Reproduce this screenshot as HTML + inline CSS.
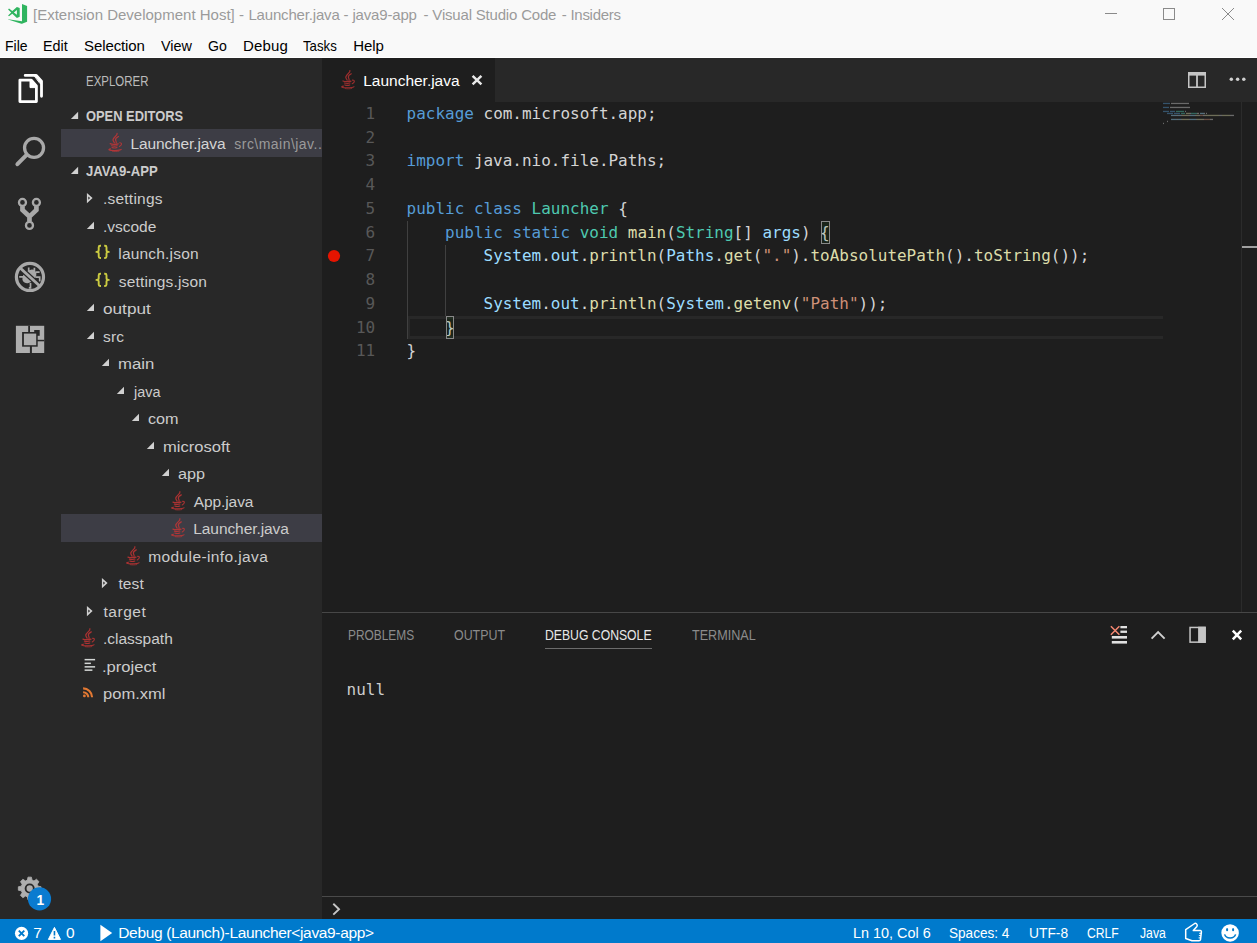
<!DOCTYPE html>
<html lang="en">
<head>
<meta charset="utf-8">
<title>[Extension Development Host] - Launcher.java - java9-app - Visual Studio Code - Insiders</title>
<style>
html,body{margin:0;padding:0;}
body{width:1257px;height:943px;overflow:hidden;position:relative;background:#1e1e1e;font-family:"Liberation Sans",sans-serif;}
.b{position:absolute;}
.t{position:absolute;white-space:pre;transform-origin:0 50%;display:block;}
svg{position:absolute;overflow:visible;}
.code{position:absolute;left:406.6px;white-space:pre;font-family:"DejaVu Sans Mono","Liberation Mono",monospace;font-size:15.987px;line-height:24px;height:24px;color:#d4d4d4;}
.ln{position:absolute;left:322px;width:53.2px;text-align:right;white-space:pre;font-family:"DejaVu Sans Mono","Liberation Mono",monospace;font-size:15.987px;line-height:24px;height:24px;color:#585858;}
.k{color:#569cd6}.ty{color:#4ec9b0}.v{color:#9cdcfe}.f{color:#dcdcaa}.s{color:#ce9178}
</style>
</head>
<body>
<header id="titlebar" aria-label="Title bar">
<div class="b" style="left:0px;top:0px;width:1257px;height:57px;background:#f9f9f9;"></div>
<div class="b" style="left:0px;top:57px;width:1257px;height:1px;background:#ffffff;"></div>
<div class="b" style="left:1105px;top:13px;width:12px;height:1px;background:#8a8a8a;"></div>
<div class="b" style="left:1163px;top:8px;width:10px;height:10px;border:1px solid #8a8a8a;"></div>
<svg style="left:1222px;top:8px" width="12" height="12" viewBox="0 0 12 12"><path d="M0 0L12 12M12 0L0 12" stroke="#8a8a8a" stroke-width="1" fill="none"/></svg>
<svg width="1257" height="943" viewBox="0 0 1257 943" style="left:0;top:0" aria-hidden="true">
<g transform="translate(2 0)" fill="#2fb45f"><path d="M20 3.9L25.1 6.1V21.7L20 23.75Z"/><path d="M6.1 19.2L20 21.3V23.75H19.4L6.1 19.6Z"/><path fill-rule="evenodd" d="M14.9 6.9L17.7 8.1V16.7L14.9 17.9L10.3 13.7L7 16.2L6.1 15.4L9.2 12.4L6.1 9.4L7 8.6L10.3 11.1ZM14.9 10.1L11.9 12.4L14.9 14.7Z"/></g>
</svg>
<span class="t" style='left:32.98px;top:5px;color:#9b9b9b;line-height:20px;font-size:15px;'>[Extension Development Host] -</span>
<span class="t" style='left:248.38px;top:5px;color:#9b9b9b;line-height:20px;font-size:15px;letter-spacing:-0.168px;'>Launcher.java - java9-app</span>
<span class="t" style='left:423.56px;top:5px;color:#9b9b9b;line-height:20px;font-size:15px;letter-spacing:-0.188px;'>- Visual Studio Code</span>
<span class="t" style='left:561.74px;top:5px;color:#9b9b9b;line-height:20px;font-size:15px;letter-spacing:-0.257px;'>- Insiders</span>
</header>
<nav id="menubar" aria-label="Menu bar">
<span class="t" style='left:5.45px;top:36px;color:#000000;line-height:20px;font-size:15px;transform:scaleX(0.9320);'>File</span>
<span class="t" style='left:42.96px;top:36px;color:#000000;line-height:20px;font-size:15px;transform:scaleX(0.9552);'>Edit</span>
<span class="t" style='left:84.12px;top:36px;color:#000000;line-height:20px;font-size:15px;letter-spacing:-0.115px;'>Selection</span>
<span class="t" style='left:160.74px;top:36px;color:#000000;line-height:20px;font-size:15px;transform:scaleX(0.9606);'>View</span>
<span class="t" style='left:208.17px;top:36px;color:#000000;line-height:20px;font-size:15px;transform:scaleX(0.9406);'>Go</span>
<span class="t" style='left:242.95px;top:36px;color:#000000;line-height:20px;font-size:15px;letter-spacing:0.178px;'>Debug</span>
<span class="t" style='left:303.42px;top:36px;color:#000000;line-height:20px;font-size:15px;transform:scaleX(0.8813);'>Tasks</span>
<span class="t" style='left:353.17px;top:36px;color:#000000;line-height:20px;font-size:15px;letter-spacing:-0.018px;'>Help</span>
</nav>
<aside id="activitybar" aria-label="Activity bar">
<div class="b" style="left:0px;top:58px;width:61px;height:861px;background:#282828;"></div>
<svg width="1257" height="943" viewBox="0 0 1257 943" style="left:0;top:0" aria-hidden="true">
<g transform="translate(10 66)" fill="none" stroke="#ffffff" stroke-width="2.8" stroke-linejoin="round" stroke-linecap="round"><path d="M9.9 14.1H21.3L26.4 19.9V35.6H9.9Z"/><path d="M20 14.1V21.6H26.4L21.3 14.1Z" fill="#ffffff" stroke-width="1"/><path d="M15.2 9.4H26.3L31.5 15.2V30.3"/><path d="M24.2 9.4H26.3L31.5 15.2V17.6H30.4Z" fill="#ffffff" stroke-width="1"/></g>
<g transform="translate(10 130)" fill="none" stroke="#a9a9a9"><circle cx="24.05" cy="17.85" r="9.5" stroke-width="3.3"/><path d="M16.6 24.8L7.4 34.2" stroke-width="4" stroke-linecap="round"/></g>
<g transform="translate(10 192)" fill="none" stroke="#a9a9a9"><circle cx="12.47" cy="10.47" r="3.5" stroke-width="2.3"/><circle cx="26.4" cy="10.47" r="3.5" stroke-width="2.3"/><circle cx="19.47" cy="33.4" r="3.5" stroke-width="2.3"/><path d="M12.47 14.2V18L19.47 24.6V29.6M26.4 14.2V18L19.47 24.6" stroke-width="4.7" stroke-linejoin="miter"/></g>
<g transform="translate(9 255)" fill="none" stroke="#a9a9a9"><ellipse cx="20.4" cy="21.4" rx="8" ry="5.6" transform="rotate(-42 20.4 21.4)" fill="#a9a9a9" stroke="none"/><path d="M10.2 21.9H15M27 17.2H30.6M26.5 22.1H30.7V26.4M19.7 12.4V17M25.4 12.8V16.5M21.5 28V32.9H19.8" stroke-width="1.7"/><path d="M11.2 13L30.7 31" stroke="#282828" stroke-width="5.2"/><path d="M11.2 13L30.7 31" stroke-width="2.9"/><circle cx="20.95" cy="21.95" r="13.55" stroke-width="3.2"/></g>
<g transform="translate(9 318)"><rect x="6.9" y="7.8" width="28.3" height="27.2" fill="#aeaeae"/><g fill="#282828"><rect x="19.2" y="7.8" width="1.8" height="7"/><rect x="20.9" y="28" width="2" height="7"/><rect x="28" y="21.8" width="7.2" height="1.5"/><rect x="25.2" y="12" width="5.5" height="5.8"/><rect x="13.1" y="14" width="15.6" height="14.7"/></g><rect x="14.9" y="15.6" width="12.3" height="11.6" fill="#aeaeae"/></g>
<path d="M27.98 877.13L31.42 877.13L32.02 880.12L33.99 880.93L36.53 879.24L38.96 881.67L37.27 884.21L38.08 886.18L41.07 886.78L41.07 890.22L38.08 890.82L37.27 892.79L38.96 895.33L36.53 897.76L33.99 896.07L32.02 896.88L31.42 899.87L27.98 899.87L27.38 896.88L25.41 896.07L22.87 897.76L20.44 895.33L22.13 892.79L21.32 890.82L18.33 890.22L18.33 886.78L21.32 886.18L22.13 884.21L20.44 881.67L22.87 879.24L25.41 880.93L27.38 880.12Z" fill="#aeaeae" stroke="#aeaeae" stroke-width="0.8" stroke-linejoin="round"/>
<circle cx="29.7" cy="888.5" r="4.1" fill="#aeaeae" stroke="#282828" stroke-width="1.9"/>
<circle cx="39.5" cy="898.9" r="11.6" fill="#0a7bd0"/>
</svg>
<span class="t" style='left:36.61px;top:891px;color:#ffffff;line-height:20px;font-size:13.75px;font-weight:700;'>1</span>
</aside>
<aside id="sidebar" aria-label="Explorer">
<div class="b" style="left:61px;top:58px;width:261px;height:861px;background:#282828;"></div>
<div class="b" style="left:61px;top:129px;width:261px;height:28px;background:#3d3d45;"></div>
<div class="b" style="left:61px;top:514px;width:261px;height:27.5px;background:#3d3d45;"></div>
<svg width="1257" height="943" viewBox="0 0 1257 943" style="left:0;top:0" aria-hidden="true">
<path fill-rule="evenodd" d="M86.90 193.00L92.60 198.10L86.90 203.20ZM88.30 196.40V199.80L90.10 198.10Z" fill="#d0d0d0"/>
<path d="M94.00 221.80V229.00H86.80Z" fill="#d0d0d0"/>
<g transform="translate(95.80 244.80)" fill="none" stroke="#cbcb41" stroke-width="1.9" stroke-linejoin="round"><path d="M5.2 1H4.3Q2.9 1 2.9 2.4V5.4Q2.9 7.1 0.6 7.1Q2.9 7.1 2.9 8.8V11.8Q2.9 13.2 4.3 13.2H5.2"/><path d="M8.4 1H9.3Q10.7 1 10.7 2.4V5.4Q10.7 7.1 13 7.1Q10.7 7.1 10.7 8.8V11.8Q10.7 13.2 9.3 13.2H8.4"/></g>
<g transform="translate(95.80 272.80)" fill="none" stroke="#cbcb41" stroke-width="1.9" stroke-linejoin="round"><path d="M5.2 1H4.3Q2.9 1 2.9 2.4V5.4Q2.9 7.1 0.6 7.1Q2.9 7.1 2.9 8.8V11.8Q2.9 13.2 4.3 13.2H5.2"/><path d="M8.4 1H9.3Q10.7 1 10.7 2.4V5.4Q10.7 7.1 13 7.1Q10.7 7.1 10.7 8.8V11.8Q10.7 13.2 9.3 13.2H8.4"/></g>
<path d="M94.00 303.80V311.00H86.80Z" fill="#d0d0d0"/>
<path d="M94.00 331.80V339.00H86.80Z" fill="#d0d0d0"/>
<path d="M109.00 358.80V366.00H101.80Z" fill="#d0d0d0"/>
<path d="M124.00 386.80V394.00H116.80Z" fill="#d0d0d0"/>
<path d="M139.00 413.80V421.00H131.80Z" fill="#d0d0d0"/>
<path d="M154.00 441.80V449.00H146.80Z" fill="#d0d0d0"/>
<path d="M169.00 468.80V476.00H161.80Z" fill="#d0d0d0"/>
<g transform="translate(170.60 491.00)" fill="none" stroke="#cc3535" stroke-linecap="round" opacity="0.8"><path d="M9.3 0.7C10.2 2.8 5.4 4.6 5.2 7.2C5.1 8.4 6.2 9.2 6.5 10.2" stroke-width="1.25"/><path d="M10.7 3.9C8.6 5 7.4 6.2 7.8 7.5C8.1 8.5 8.9 9.2 8.4 10.4" stroke-width="1.2"/><path d="M2.4 11.1C4 11.9 8.5 11.8 10.4 11.2" stroke-width="1.3"/><path d="M3.8 13.1C5.5 13.6 8.3 13.5 9.4 13.1" stroke-width="1.1"/><path d="M4.2 15C5.6 15.5 8.2 15.4 9.2 15" stroke-width="1.1"/><path d="M11.9 10.2C14.4 10 14.4 12.6 11.6 13.9" stroke-width="1.1"/><path d="M2.8 16.2C-0.6 16.9 1.2 17.8 6.5 17.9C10.6 17.9 13 17.5 13.4 16.8" stroke-width="1.15"/><path d="M4.6 18.7C6.6 19.1 9.6 19 11.2 18.6" stroke-width="0.7"/></g>
<g transform="translate(170.60 518.00)" fill="none" stroke="#cc3535" stroke-linecap="round" opacity="0.8"><path d="M9.3 0.7C10.2 2.8 5.4 4.6 5.2 7.2C5.1 8.4 6.2 9.2 6.5 10.2" stroke-width="1.25"/><path d="M10.7 3.9C8.6 5 7.4 6.2 7.8 7.5C8.1 8.5 8.9 9.2 8.4 10.4" stroke-width="1.2"/><path d="M2.4 11.1C4 11.9 8.5 11.8 10.4 11.2" stroke-width="1.3"/><path d="M3.8 13.1C5.5 13.6 8.3 13.5 9.4 13.1" stroke-width="1.1"/><path d="M4.2 15C5.6 15.5 8.2 15.4 9.2 15" stroke-width="1.1"/><path d="M11.9 10.2C14.4 10 14.4 12.6 11.6 13.9" stroke-width="1.1"/><path d="M2.8 16.2C-0.6 16.9 1.2 17.8 6.5 17.9C10.6 17.9 13 17.5 13.4 16.8" stroke-width="1.15"/><path d="M4.6 18.7C6.6 19.1 9.6 19 11.2 18.6" stroke-width="0.7"/></g>
<g transform="translate(125.60 546.00)" fill="none" stroke="#cc3535" stroke-linecap="round" opacity="0.8"><path d="M9.3 0.7C10.2 2.8 5.4 4.6 5.2 7.2C5.1 8.4 6.2 9.2 6.5 10.2" stroke-width="1.25"/><path d="M10.7 3.9C8.6 5 7.4 6.2 7.8 7.5C8.1 8.5 8.9 9.2 8.4 10.4" stroke-width="1.2"/><path d="M2.4 11.1C4 11.9 8.5 11.8 10.4 11.2" stroke-width="1.3"/><path d="M3.8 13.1C5.5 13.6 8.3 13.5 9.4 13.1" stroke-width="1.1"/><path d="M4.2 15C5.6 15.5 8.2 15.4 9.2 15" stroke-width="1.1"/><path d="M11.9 10.2C14.4 10 14.4 12.6 11.6 13.9" stroke-width="1.1"/><path d="M2.8 16.2C-0.6 16.9 1.2 17.8 6.5 17.9C10.6 17.9 13 17.5 13.4 16.8" stroke-width="1.15"/><path d="M4.6 18.7C6.6 19.1 9.6 19 11.2 18.6" stroke-width="0.7"/></g>
<path fill-rule="evenodd" d="M101.90 578.00L107.60 583.10L101.90 588.20ZM103.30 581.40V584.80L105.10 583.10Z" fill="#d0d0d0"/>
<path fill-rule="evenodd" d="M86.90 606.00L92.60 611.10L86.90 616.20ZM88.30 609.40V612.80L90.10 611.10Z" fill="#d0d0d0"/>
<g transform="translate(80.60 628.00)" fill="none" stroke="#cc3535" stroke-linecap="round" opacity="0.8"><path d="M9.3 0.7C10.2 2.8 5.4 4.6 5.2 7.2C5.1 8.4 6.2 9.2 6.5 10.2" stroke-width="1.25"/><path d="M10.7 3.9C8.6 5 7.4 6.2 7.8 7.5C8.1 8.5 8.9 9.2 8.4 10.4" stroke-width="1.2"/><path d="M2.4 11.1C4 11.9 8.5 11.8 10.4 11.2" stroke-width="1.3"/><path d="M3.8 13.1C5.5 13.6 8.3 13.5 9.4 13.1" stroke-width="1.1"/><path d="M4.2 15C5.6 15.5 8.2 15.4 9.2 15" stroke-width="1.1"/><path d="M11.9 10.2C14.4 10 14.4 12.6 11.6 13.9" stroke-width="1.1"/><path d="M2.8 16.2C-0.6 16.9 1.2 17.8 6.5 17.9C10.6 17.9 13 17.5 13.4 16.8" stroke-width="1.15"/><path d="M4.6 18.7C6.6 19.1 9.6 19 11.2 18.6" stroke-width="0.7"/></g>
<g transform="translate(84.20 659.40)" fill="#d4d7d6"><rect x="0.4" y="-0.5" width="10.5" height="1.5"/><rect x="0.4" y="3.2" width="6.3" height="1.5"/><rect x="0.4" y="6.7" width="10.5" height="1.5"/><rect x="0.4" y="10" width="7.8" height="1.5"/></g>
<g transform="translate(82.90 687.30)" fill="none" stroke="#e37933" stroke-width="2.1"><path d="M0.2 1.1C5 1.1 9.2 5 9.2 9.9"/><path d="M0.2 4.9C3.2 4.9 5.4 7.2 5.4 9.9"/><circle cx="1.5" cy="8.6" r="1.4" fill="#e37933" stroke="none"/></g>
<path d="M78.10 111.80V119.00H70.90Z" fill="#d0d0d0"/>
<path d="M78.10 166.80V174.00H70.90Z" fill="#d0d0d0"/>
<g transform="translate(107.80 132.60)" fill="none" stroke="#cc3535" stroke-linecap="round" opacity="0.8"><path d="M9.3 0.7C10.2 2.8 5.4 4.6 5.2 7.2C5.1 8.4 6.2 9.2 6.5 10.2" stroke-width="1.25"/><path d="M10.7 3.9C8.6 5 7.4 6.2 7.8 7.5C8.1 8.5 8.9 9.2 8.4 10.4" stroke-width="1.2"/><path d="M2.4 11.1C4 11.9 8.5 11.8 10.4 11.2" stroke-width="1.3"/><path d="M3.8 13.1C5.5 13.6 8.3 13.5 9.4 13.1" stroke-width="1.1"/><path d="M4.2 15C5.6 15.5 8.2 15.4 9.2 15" stroke-width="1.1"/><path d="M11.9 10.2C14.4 10 14.4 12.6 11.6 13.9" stroke-width="1.1"/><path d="M2.8 16.2C-0.6 16.9 1.2 17.8 6.5 17.9C10.6 17.9 13 17.5 13.4 16.8" stroke-width="1.15"/><path d="M4.6 18.7C6.6 19.1 9.6 19 11.2 18.6" stroke-width="0.7"/></g>
</svg>
<span class="t" style='left:86.45px;top:72px;color:#bbbbbb;line-height:20px;font-size:13.75px;transform:scaleX(0.8350);'>EXPLORER</span>
<span class="t" style='left:85.91px;top:107px;color:#cccccc;line-height:20px;font-size:13.75px;font-weight:700;transform:scaleX(0.9369);'>OPEN EDITORS</span>
<span class="t" style='left:86.09px;top:162px;color:#cccccc;line-height:20px;font-size:13.75px;font-weight:700;transform:scaleX(0.9544);'>JAVA9-APP</span>
<span class="t" style='left:130.41px;top:134px;color:#d4d4d4;line-height:20px;font-size:15.5px;letter-spacing:-0.109px;'>Launcher.java</span>
<span class="t" style='left:234.30px;top:134px;color:#9a9a9a;line-height:20px;font-size:14px;letter-spacing:0.467px;'>src\main\jav..</span>
<span class="t tr" style='left:102.91px;top:189px;color:#cccccc;line-height:20px;font-size:15.5px;letter-spacing:0.237px;'>.settings</span>
<span class="t tr" style='left:102.91px;top:217px;color:#cccccc;line-height:20px;font-size:15.5px;letter-spacing:-0.008px;'>.vscode</span>
<span class="t tr" style='left:118.27px;top:244px;color:#cccccc;line-height:20px;font-size:15.5px;letter-spacing:0.189px;'>launch.json</span>
<span class="t tr" style='left:118.78px;top:272px;color:#cccccc;line-height:20px;font-size:15.5px;letter-spacing:0.169px;'>settings.json</span>
<span class="t tr" style='left:103.02px;top:299px;color:#cccccc;line-height:20px;font-size:15.5px;transform:scaleX(1.1081);'>output</span>
<span class="t tr" style='left:103.06px;top:327px;color:#cccccc;line-height:20px;font-size:15.5px;letter-spacing:0.159px;'>src</span>
<span class="t tr" style='left:117.89px;top:354px;color:#cccccc;line-height:20px;font-size:15.5px;transform:scaleX(1.0790);'>main</span>
<span class="t tr" style='left:134.49px;top:382px;color:#cccccc;line-height:20px;font-size:15.5px;transform:scaleX(0.9308);'>java</span>
<span class="t tr" style='left:148.14px;top:409px;color:#cccccc;line-height:20px;font-size:15.5px;transform:scaleX(1.0451);'>com</span>
<span class="t tr" style='left:162.82px;top:437px;color:#cccccc;line-height:20px;font-size:15.5px;transform:scaleX(1.0670);'>microsoft</span>
<span class="t tr" style='left:178.22px;top:464px;color:#cccccc;line-height:20px;font-size:15.5px;transform:scaleX(1.0446);'>app</span>
<span class="t tr" style='left:193.85px;top:492px;color:#cccccc;line-height:20px;font-size:15.5px;letter-spacing:-0.110px;'>App.java</span>
<span class="t tr" style='left:193.30px;top:519px;color:#cccccc;line-height:20px;font-size:15.5px;letter-spacing:-0.084px;'>Launcher.java</span>
<span class="t tr" style='left:148.24px;top:547px;color:#cccccc;line-height:20px;font-size:15.5px;letter-spacing:0.389px;'>module-info.java</span>
<span class="t tr" style='left:118.38px;top:574px;color:#cccccc;line-height:20px;font-size:15.5px;letter-spacing:0.157px;'>test</span>
<span class="t tr" style='left:103.54px;top:602px;color:#cccccc;line-height:20px;font-size:15.5px;letter-spacing:0.506px;'>target</span>
<span class="t tr" style='left:102.91px;top:629px;color:#cccccc;line-height:20px;font-size:15.5px;letter-spacing:0.009px;'>.classpath</span>
<span class="t tr" style='left:101.98px;top:657px;color:#cccccc;line-height:20px;font-size:15.5px;transform:scaleX(1.0688);'>.project</span>
<span class="t tr" style='left:102.95px;top:684px;color:#cccccc;line-height:20px;font-size:15.5px;transform:scaleX(1.0674);'>pom.xml</span>
</aside>
<main id="editor" aria-label="Editor">
<div class="b" style="left:322px;top:58px;width:935px;height:44px;background:#282828;"></div>
<div class="b" style="left:322px;top:58px;width:173px;height:44px;background:#1e1e1e;"></div>
<div class="ln" style="top:102px">1</div>
<div class="code" style="top:102px"><span class="k">package</span> com.microsoft.app;</div>
<div class="ln" style="top:126px">2</div>
<div class="ln" style="top:149px">3</div>
<div class="code" style="top:149px"><span class="k">import</span> java.nio.file.Paths;</div>
<div class="ln" style="top:173px">4</div>
<div class="ln" style="top:197px">5</div>
<div class="code" style="top:197px"><span class="k">public</span> <span class="k">class</span> <span class="ty">Launcher</span> {</div>
<div class="ln" style="top:221px">6</div>
<div class="code" style="top:221px">    <span class="k">public</span> <span class="k">static</span> <span class="ty">void</span> <span class="f">main</span>(<span class="ty">String</span>[] <span class="v">args</span>) {</div>
<div class="ln" style="top:244px">7</div>
<div class="code" style="top:244px">        <span class="v">System</span>.<span class="v">out</span>.<span class="f">println</span>(<span class="v">Paths</span>.<span class="f">get</span>(<span class="s">"."</span>).<span class="f">toAbsolutePath</span>().<span class="f">toString</span>());</div>
<div class="ln" style="top:268px">8</div>
<div class="ln" style="top:292px">9</div>
<div class="code" style="top:292px">        <span class="v">System</span>.<span class="v">out</span>.<span class="f">println</span>(<span class="v">System</span>.<span class="f">getenv</span>(<span class="s">"Path"</span>));</div>
<div class="ln" style="top:316px">10</div>
<div class="code" style="top:316px">    }</div>
<div class="ln" style="top:339px">11</div>
<div class="code" style="top:339px">}</div>
<div class="b" style="left:407px;top:221px;width:1px;height:118px;background:#404040;"></div>
<div class="b" style="left:445px;top:245px;width:1px;height:71px;background:#404040;"></div>
<div class="b" style="left:408px;top:316px;width:755px;height:23px;box-sizing:border-box;border-top:3px solid #282828;border-bottom:3px solid #282828;border-left:2px solid #282828;"></div>
<div class="b" style="left:821px;top:221px;width:9px;height:23px;border:1px solid #888888;box-sizing:border-box;background:rgba(0,100,0,0.1)"></div>
<div class="b" style="left:446px;top:316px;width:8px;height:23px;border:1px solid #888888;box-sizing:border-box;background:rgba(0,100,0,0.1)"></div>
<div class="b" style="left:1241px;top:102px;width:1px;height:510px;background:#2b2b2b;"></div>
<div class="b" style="left:1242px;top:246px;width:15px;height:2px;background:#a0a0a0;"></div>
<svg width="1257" height="943" viewBox="0 0 1257 943" style="left:0;top:0" aria-hidden="true">
<g transform="translate(340.60 69.90)" fill="none" stroke="#cc3535" stroke-linecap="round" opacity="0.72"><path d="M9.3 0.7C10.2 2.8 5.4 4.6 5.2 7.2C5.1 8.4 6.2 9.2 6.5 10.2" stroke-width="1.25"/><path d="M10.7 3.9C8.6 5 7.4 6.2 7.8 7.5C8.1 8.5 8.9 9.2 8.4 10.4" stroke-width="1.2"/><path d="M2.4 11.1C4 11.9 8.5 11.8 10.4 11.2" stroke-width="1.3"/><path d="M3.8 13.1C5.5 13.6 8.3 13.5 9.4 13.1" stroke-width="1.1"/><path d="M4.2 15C5.6 15.5 8.2 15.4 9.2 15" stroke-width="1.1"/><path d="M11.9 10.2C14.4 10 14.4 12.6 11.6 13.9" stroke-width="1.1"/><path d="M2.8 16.2C-0.6 16.9 1.2 17.8 6.5 17.9C10.6 17.9 13 17.5 13.4 16.8" stroke-width="1.15"/><path d="M4.6 18.7C6.6 19.1 9.6 19 11.2 18.6" stroke-width="0.7"/></g>
<g transform="translate(1188 72)"><rect x="0.75" y="0.75" width="16.5" height="14.5" fill="none" stroke="#c5c5c5" stroke-width="1.5"/><rect x="0" y="0" width="18" height="3.6" fill="#c5c5c5"/><rect x="8.1" y="0" width="1.8" height="16" fill="#c5c5c5"/></g>
<circle cx="1231.3" cy="79.2" r="1.75" fill="#d0d0d0"/>
<circle cx="1237.6" cy="79.2" r="1.75" fill="#d0d0d0"/>
<circle cx="1243.8" cy="79.2" r="1.75" fill="#d0d0d0"/>
<path d="M472.6 75.9L481.4 84.3M481.4 75.9L472.6 84.3" stroke="#e8e8e8" stroke-width="2.5" fill="none"/>
<circle cx="334" cy="256" r="6.1" fill="#e51400"/>
<g opacity="0.42"><rect x="1163" y="102.8" width="7" height="1.3" fill="#569cd6"/><rect x="1171" y="102.8" width="18" height="1.3" fill="#d4d4d4"/><rect x="1163" y="106.8" width="6" height="1.3" fill="#569cd6"/><rect x="1170" y="106.8" width="20" height="1.3" fill="#d4d4d4"/><rect x="1163" y="110.8" width="6" height="1.3" fill="#569cd6"/><rect x="1170" y="110.8" width="5" height="1.3" fill="#569cd6"/><rect x="1176" y="110.8" width="8" height="1.3" fill="#4ec9b0"/><rect x="1185" y="110.8" width="1" height="1.3" fill="#d4d4d4"/><rect x="1167" y="112.8" width="6" height="1.3" fill="#569cd6"/><rect x="1174" y="112.8" width="6" height="1.3" fill="#569cd6"/><rect x="1181" y="112.8" width="4" height="1.3" fill="#4ec9b0"/><rect x="1186" y="112.8" width="4" height="1.3" fill="#dcdcaa"/><rect x="1190" y="112.8" width="1" height="1.3" fill="#d4d4d4"/><rect x="1191" y="112.8" width="6" height="1.3" fill="#4ec9b0"/><rect x="1197" y="112.8" width="2" height="1.3" fill="#d4d4d4"/><rect x="1200" y="112.8" width="4" height="1.3" fill="#9cdcfe"/><rect x="1204" y="112.8" width="1" height="1.3" fill="#d4d4d4"/><rect x="1206" y="112.8" width="1" height="1.3" fill="#d4d4d4"/><rect x="1171" y="114.8" width="6" height="1.3" fill="#9cdcfe"/><rect x="1177" y="114.8" width="1" height="1.3" fill="#d4d4d4"/><rect x="1178" y="114.8" width="3" height="1.3" fill="#9cdcfe"/><rect x="1181" y="114.8" width="1" height="1.3" fill="#d4d4d4"/><rect x="1182" y="114.8" width="7" height="1.3" fill="#dcdcaa"/><rect x="1189" y="114.8" width="1" height="1.3" fill="#d4d4d4"/><rect x="1190" y="114.8" width="5" height="1.3" fill="#9cdcfe"/><rect x="1195" y="114.8" width="1" height="1.3" fill="#d4d4d4"/><rect x="1196" y="114.8" width="3" height="1.3" fill="#dcdcaa"/><rect x="1199" y="114.8" width="1" height="1.3" fill="#d4d4d4"/><rect x="1200" y="114.8" width="3" height="1.3" fill="#ce9178"/><rect x="1203" y="114.8" width="2" height="1.3" fill="#d4d4d4"/><rect x="1205" y="114.8" width="14" height="1.3" fill="#dcdcaa"/><rect x="1219" y="114.8" width="3" height="1.3" fill="#d4d4d4"/><rect x="1222" y="114.8" width="8" height="1.3" fill="#dcdcaa"/><rect x="1230" y="114.8" width="4" height="1.3" fill="#d4d4d4"/><rect x="1171" y="118.8" width="6" height="1.3" fill="#9cdcfe"/><rect x="1177" y="118.8" width="1" height="1.3" fill="#d4d4d4"/><rect x="1178" y="118.8" width="3" height="1.3" fill="#9cdcfe"/><rect x="1181" y="118.8" width="1" height="1.3" fill="#d4d4d4"/><rect x="1182" y="118.8" width="7" height="1.3" fill="#dcdcaa"/><rect x="1189" y="118.8" width="1" height="1.3" fill="#d4d4d4"/><rect x="1190" y="118.8" width="6" height="1.3" fill="#9cdcfe"/><rect x="1196" y="118.8" width="1" height="1.3" fill="#d4d4d4"/><rect x="1197" y="118.8" width="6" height="1.3" fill="#dcdcaa"/><rect x="1203" y="118.8" width="1" height="1.3" fill="#d4d4d4"/><rect x="1204" y="118.8" width="6" height="1.3" fill="#ce9178"/><rect x="1210" y="118.8" width="3" height="1.3" fill="#d4d4d4"/><rect x="1167" y="120.8" width="1" height="1.3" fill="#d4d4d4"/><rect x="1163" y="122.8" width="1" height="1.3" fill="#d4d4d4"/></g>
</svg>
<span class="t" style='left:363.26px;top:71px;color:#ffffff;line-height:20px;font-size:15.5px;letter-spacing:-0.019px;'>Launcher.java</span>
</main>
<section id="panel" aria-label="Panel">
<div class="b" style="left:322px;top:612px;width:935px;height:1px;background:#474747;"></div>
<div class="b" style="left:545.4px;top:648px;width:106.6px;height:1px;background:#6c6c6c;"></div>
<div class="code" style="left:346.6px;top:678px;color:#cccccc">null</div>
<div class="b" style="left:322px;top:896px;width:935px;height:1px;background:#4a4a4a;"></div>
<svg width="1257" height="943" viewBox="0 0 1257 943" style="left:0;top:0" aria-hidden="true">
<g transform="translate(1110.4 625.7)" fill="#e0e0e0"><rect x="10" y="0.3" width="6.6" height="2.3"/><rect x="10" y="4.9" width="6.6" height="2.3"/><rect x="1.4" y="10.3" width="15.2" height="2.6"/><rect x="1.4" y="15.3" width="15.2" height="2.6"/><path d="M0.5 0.6L9 9M9 0.6L0.5 9" stroke="#f48771" stroke-width="1.5" fill="none"/></g>
<path d="M1151.6 638.6L1158.1 632.1L1164.6 638.6" stroke="#d0d0d0" stroke-width="1.9" fill="none"/>
<g transform="translate(1189.3 626.7)"><rect x="0.75" y="0.75" width="15" height="14.7" fill="none" stroke="#c5c5c5" stroke-width="1.5"/><rect x="8.8" y="0" width="7.7" height="16.2" fill="#c5c5c5"/></g>
<path d="M1232.8 630.7L1241.2 639.4M1241.2 630.7L1232.8 639.4" stroke="#ffffff" stroke-width="2.5" fill="none"/>
<path d="M333.3 903.8L339 909.2L333.3 914.6" stroke="#c5c5c5" stroke-width="1.9" fill="none"/>
</svg>
<span class="t" style='left:347.56px;top:626px;color:#8b8b8b;line-height:20px;font-size:13.75px;transform:scaleX(0.8651);'>PROBLEMS</span>
<span class="t" style='left:454.36px;top:626px;color:#8b8b8b;line-height:20px;font-size:13.75px;transform:scaleX(0.9023);'>OUTPUT</span>
<span class="t" style='left:545.19px;top:626px;color:#e7e7e7;line-height:20px;font-size:13.75px;transform:scaleX(0.8882);'>DEBUG CONSOLE</span>
<span class="t" style='left:692.40px;top:626px;color:#8b8b8b;line-height:20px;font-size:13.75px;transform:scaleX(0.9171);'>TERMINAL</span>
</section>
<footer id="statusbar" aria-label="Status bar">
<div class="b" style="left:0px;top:919px;width:1257px;height:24px;background:#007acc;"></div>
<svg width="1257" height="943" viewBox="0 0 1257 943" style="left:0;top:0" aria-hidden="true">
<circle cx="21.55" cy="933.35" r="6.6" fill="#ffffff"/>
<path d="M18.8 930.6L24.3 936.1M24.3 930.6L18.8 936.1" stroke="#007acc" stroke-width="1.9" fill="none"/>
<path d="M54.45 927.4L60.5 939.4H48.4Z" fill="#ffffff" stroke="#ffffff" stroke-width="1" stroke-linejoin="round"/>
<path d="M54.45 931V935.6M54.45 936.8V938.4" stroke="#007acc" stroke-width="1.6" fill="none"/>
<path d="M100.4 924.7L112.2 933L100.4 941.3Z" fill="#ffffff"/>
<path d="M1185.7 929.6L1194.7 923.5Q1196.1 922.9 1197 924.5Q1197.5 925.6 1196.9 926.4L1193.3 930.6H1200.3Q1201.5 930.6 1201.4 931.9L1200.5 939.6Q1200.2 940.8 1199 940.8H1192L1185.7 938.5Z" fill="none" stroke="#ffffff" stroke-width="1.5" stroke-linejoin="round"/>
<path d="M1199.2 933.3H1201M1198.9 935.6H1200.8M1198.6 937.9H1200.5" stroke="#ffffff" stroke-width="1" fill="none"/>
<circle cx="1230.1" cy="932.9" r="8.75" fill="#ffffff"/>
<ellipse cx="1227.1" cy="929.7" rx="1.05" ry="1.6" fill="#007acc"/><ellipse cx="1233.1" cy="929.7" rx="1.05" ry="1.6" fill="#007acc"/>
<path d="M1224.6 934.4C1226 939.2 1234.2 939.2 1235.6 934.4" stroke="#007acc" stroke-width="1.5" fill="none"/>
</svg>
<span class="t" style='left:33.35px;top:923px;color:#ffffff;line-height:20px;font-size:15.5px;'>7</span>
<span class="t" style='left:66.10px;top:923px;color:#ffffff;line-height:20px;font-size:15.5px;'>0</span>
<span class="t" style='left:118.26px;top:923px;color:#ffffff;line-height:20px;font-size:15.5px;letter-spacing:-0.343px;'>Debug (Launch)-Launcher&lt;java9-app&gt;</span>
<span class="t" style='left:853.08px;top:923px;color:#ffffff;line-height:20px;font-size:15.5px;transform:scaleX(0.9288);'>Ln 10, Col 6</span>
<span class="t" style='left:949.34px;top:923px;color:#ffffff;line-height:20px;font-size:15.5px;transform:scaleX(0.8753);'>Spaces: 4</span>
<span class="t" style='left:1029.14px;top:923px;color:#ffffff;line-height:20px;font-size:15.5px;transform:scaleX(0.8898);'>UTF-8</span>
<span class="t" style='left:1087.22px;top:923px;color:#ffffff;line-height:20px;font-size:15.5px;transform:scaleX(0.7856);'>CRLF</span>
<span class="t" style='left:1140.07px;top:923px;color:#ffffff;line-height:20px;font-size:15.5px;transform:scaleX(0.7901);'>Java</span>
</footer>
</body>
</html>
